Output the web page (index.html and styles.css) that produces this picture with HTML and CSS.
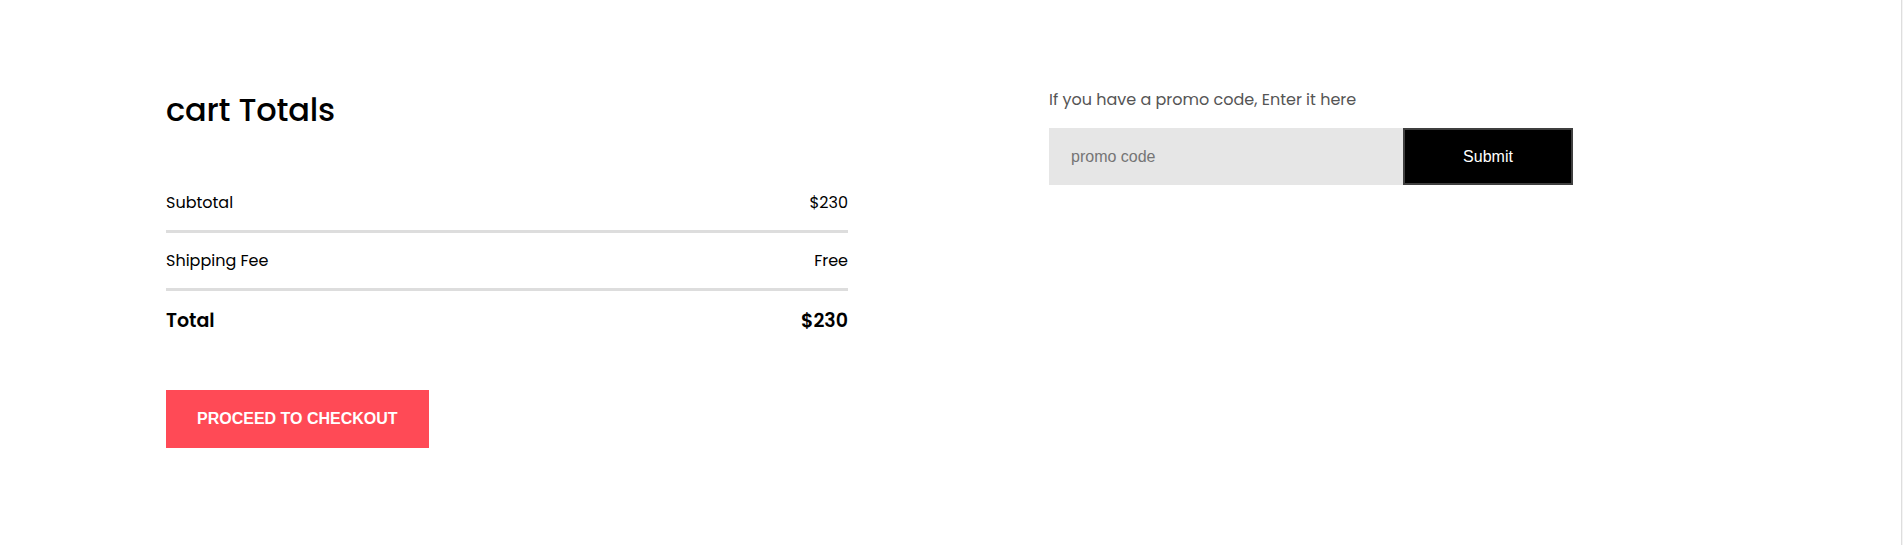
FILE: index.html
```html
<!DOCTYPE html>
<html lang="en">
<head>
<meta charset="utf-8">
<title>Cart Totals</title>
<link rel="stylesheet" href="styles.css">
</head>
<body>
<div class="page">
  <main class="cart">
    <section class="totals">
      <h2 class="totals-title">cart Totals</h2>
      <div class="totals-table">
        <div class="totals-row">
          <span>Subtotal</span>
          <span>$230</span>
        </div>
        <div class="totals-row">
          <span>Shipping Fee</span>
          <span>Free</span>
        </div>
        <div class="totals-row totals-row--grand">
          <span class="grand-label">Total</span>
          <span class="grand-value">$230</span>
        </div>
      </div>
      <button class="checkout-btn" type="button">PROCEED TO CHECKOUT</button>
    </section>
    <section class="promo">
      <p class="promo-label">If you have a promo code, Enter it here</p>
      <form class="promo-form">
        <input class="promo-input" type="text" placeholder="promo code">
        <button class="promo-submit" type="button">Submit</button>
      </form>
    </section>
  </main>
  <div class="scroll-edge"></div>
</div>
</body>
</html>
```

FILE: styles.css
```css
* {
  box-sizing: border-box;
}

html, body {
  margin: 0;
  padding: 0;
  background: #ffffff;
}

body {
  font-family: "Poppins", "Inter", "Noto Sans", sans-serif;
  color: #000;
}

.page {
  display: flex;
  min-height: 545px;
}

.cart {
  flex: 1;
  display: flex;
  gap: 201px;
  padding: 86px 0 0 166px;
}

.scroll-edge {
  width: 2px;
  border-left: 1px solid #dedede;
  background: #f4f4f4;
}

.totals {
  width: 682px;
  display: flex;
  flex-direction: column;
  align-items: flex-start;
}

.totals-title {
  margin: 0;
  font-size: 32px;
  line-height: 48px;
  font-weight: 500;
  letter-spacing: -0.2px;
}

.totals-table {
  width: 100%;
  margin-top: 41px;
}

.totals-row {
  display: flex;
  justify-content: space-between;
  font-size: 16px;
  line-height: 24px;
  padding: 16px 0 15px;
  border-bottom: 3px solid #dddddd;
}

.totals-row--grand {
  border-bottom: none;
  padding: 16px 0 0;
  line-height: 28px;
  font-size: 19px;
  font-weight: 600;
}

.checkout-btn {
  margin-top: 55px;
  border: none;
  background: #ff4a56;
  color: #ffffff;
  font-family: "Liberation Sans", Arial, sans-serif;
  font-size: 16px;
  font-weight: 700;
  line-height: 20px;
  padding: 19px 31px;
  cursor: pointer;
}

.promo {
  display: flex;
  flex-direction: column;
}

.promo-label {
  margin: 3px 0 0;
  font-size: 16px;
  line-height: 22px;
  color: #555555;
}

.promo-form {
  display: flex;
  margin-top: 17px;
}

.promo-input {
  width: 354px;
  height: 57px;
  border: none;
  outline: none;
  background: #e6e6e6;
  padding: 0 22px;
  font-family: "Liberation Sans", Arial, sans-serif;
  font-size: 16px;
  color: #333;
}

.promo-input::placeholder {
  color: #757575;
}

.promo-submit {
  width: 170px;
  height: 57px;
  background: #000000;
  color: #ffffff;
  border: 2px solid #3f3f3f;
  font-family: "Liberation Sans", Arial, sans-serif;
  font-size: 16px;
  cursor: pointer;
}
```
